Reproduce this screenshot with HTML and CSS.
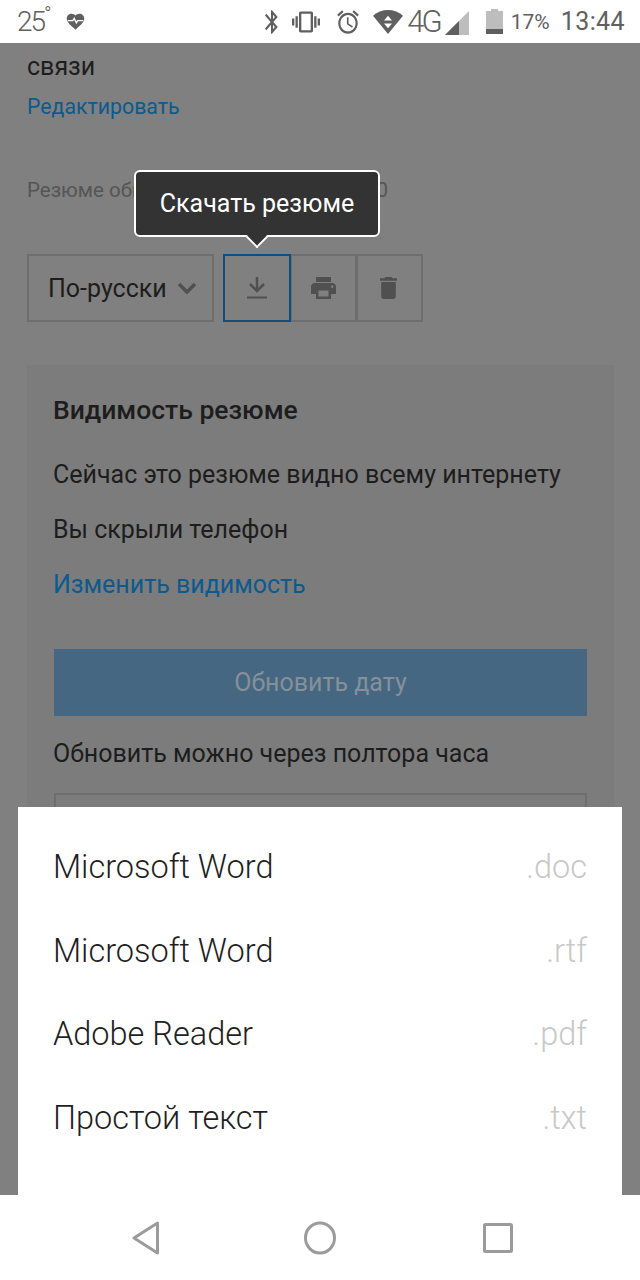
FILE: index.html
```html
<!DOCTYPE html>
<html lang="ru">
<head>
    <meta charset="UTF-8">
    <title>Резюме</title>
    <link rel="stylesheet" href="styles.css">
</head>
<body>
    <div class="statusbar">
        <div class="status-left">
            <span class="temp">25</span><span class="deg">°</span>
            <svg class="ic-heart" viewBox="0 0 24 24" preserveAspectRatio="none"><path d="M12 21.35l-1.45-1.32C5.4 15.36 2 12.28 2 8.5 2 5.42 4.42 3 7.5 3c1.74 0 3.41.81 4.5 2.09C13.09 3.81 14.76 3 16.5 3 19.58 3 22 5.42 22 8.5c0 3.78-3.4 6.86-8.55 11.54L12 21.35z"/><path class="pulse" d="M3 11h6l1.5-2.5 2.5 5 1.5-2.5h6.5"/></svg>
        </div>
        <div class="status-right">
            <svg class="ic-bt" viewBox="0 0 24 24" preserveAspectRatio="none"><path d="M17.71 7.71L12 2h-1v7.59L6.41 5 5 6.41 10.59 12 5 17.59 6.41 19 11 14.41V22h1l5.71-5.71-4.3-4.29 4.3-4.29zM13 5.83l1.88 1.88L13 9.59V5.83zm1.88 10.46L13 18.17v-3.76l1.88 1.88z"/></svg>
            <svg class="ic-vibrate" viewBox="0 0 24 24" preserveAspectRatio="none"><path d="M0 15h2V9H0v6zm3 2h2V7H3v10zm19-8v6h2V9h-2zm-3 8h2V7h-2v10zM16.5 3h-9C6.67 3 6 3.67 6 4.5v15c0 .83.67 1.5 1.5 1.5h9c.83 0 1.5-.67 1.5-1.5v-15c0-.83-.67-1.5-1.5-1.5zM16 19H8V5h8v14z"/></svg>
            <svg class="ic-alarm" viewBox="0 0 24 24" preserveAspectRatio="none"><path d="M22 5.72l-4.6-3.86-1.29 1.53 4.6 3.86L22 5.72zM7.88 3.39L6.6 1.86 2 5.71l1.29 1.53 4.59-3.85zM12.5 8H11v6l4.75 2.85.75-1.23-4-2.37V8zM12 4c-4.97 0-9 4.03-9 9s4.02 9 9 9c4.97 0 9-4.03 9-9s-4.03-9-9-9zm0 16c-3.87 0-7-3.13-7-7s3.13-7 7-7 7 3.13 7 7-3.13 7-7 7z"/></svg>
            <svg class="ic-wifi" viewBox="0 0 30 26" preserveAspectRatio="none"><path d="M0 7C8-1 22-1 30 7L15 26z"/><path class="arrows" d="M15 7l4 5h-8zM15 20l4-5h-8z"/></svg>
            <span class="net">4G</span>
            <svg class="ic-signal" viewBox="0 0 24 24" preserveAspectRatio="none"><path class="signal-off" d="M24 0v24H0z"/><path d="M14 10v14H0z"/></svg>
            <svg class="ic-battery" viewBox="0 0 17 25" preserveAspectRatio="none"><path class="battery-off" d="M5 0h7v2h5v23H0V2h5z"/><path d="M0 20h17v5H0z"/></svg>
            <span class="percent">17%</span>
            <span class="clock">13:44</span>
        </div>
    </div>

    <div class="screen">
        <div class="page">
            <p class="top-line">связи</p>
            <a class="edit-link">Редактировать</a>
            <p class="updated">Резюме обновлено 14 апреля в 12:50</p>

            <div class="actions">
                <div class="lang">По-русски
                    <svg class="chevron" viewBox="0 0 20 12"><path d="M2 2l8 8 8-8"/></svg>
                </div>
                <div class="tools">
                    <div class="tool tool-active">
                        <svg class="ic-download" viewBox="0 0 20 22" preserveAspectRatio="none"><path class="arrow" d="M10 0v13M3 7l7 7 7-7"/><path class="line" d="M0 20.5h20"/></svg>
                    </div>
                    <div class="tool">
                        <svg class="ic-print" viewBox="2 3 20 18" preserveAspectRatio="none"><path d="M19 8H5c-1.66 0-3 1.34-3 3v6h4v4h12v-4h4v-6c0-1.66-1.34-3-3-3zm-3 11H8v-5h8v5zm3-7c-.55 0-1-.45-1-1s.45-1 1-1 1 .45 1 1-.45 1-1 1zm-1-9H6v4h12V3z"/></svg>
                    </div>
                    <div class="tool">
                        <svg class="ic-trash" viewBox="5 3 14 18" preserveAspectRatio="none"><path d="M6 19c0 1.1.9 2 2 2h8c1.1 0 2-.9 2-2V7H6v12zM19 4h-3.5l-1-1h-5l-1 1H5v2h14V4z"/></svg>
                    </div>
                </div>
            </div>

            <div class="panel">
                <h3>Видимость резюме</h3>
                <p>Сейчас это резюме видно всему интернету</p>
                <p>Вы скрыли телефон</p>
                <a class="panel-link">Изменить видимость</a>
                <div class="update-btn">Обновить дату</div>
                <p class="update-note">Обновить можно через полтора часа</p>
                <div class="outline-box"></div>
            </div>
        </div>

        <div class="tooltip">Скачать резюме</div>

        <div class="sheet">
            <div class="sheet-row"><span>Microsoft Word</span><span class="ext">.doc</span></div>
            <div class="sheet-row"><span>Microsoft Word</span><span class="ext">.rtf</span></div>
            <div class="sheet-row"><span>Adobe Reader</span><span class="ext">.pdf</span></div>
            <div class="sheet-row"><span>Простой текст</span><span class="ext">.txt</span></div>
        </div>
    </div>

    <div class="navbar">
        <svg class="nav-back" viewBox="0 0 28 34" preserveAspectRatio="none"><path d="M25.5 2L2 17l23.5 15z"/></svg>
        <svg class="nav-home" viewBox="0 0 32 34" preserveAspectRatio="none"><ellipse cx="16" cy="17" rx="14.5" ry="15"/></svg>
        <svg class="nav-recent" viewBox="0 0 30 30" preserveAspectRatio="none"><rect x="1.5" y="1.5" width="27" height="27" rx="1"/></svg>
    </div>
</body>
</html>
```

FILE: styles.css
```css
* {
    box-sizing: border-box;
}

body {
    margin: 0;
    width: 640px;
    height: 1280px;
    display: flex;
    flex-direction: column;
    overflow: hidden;
    font-family: Roboto, "Noto Sans", sans-serif;
    background: #fff;
    color: #1d1d1d;
}

p {
    margin: 0;
}

/* Status bar */
.statusbar {
    height: 43px;
    flex: none;
    background: #fff;
    display: flex;
    justify-content: space-between;
    align-items: center;
    padding: 0 15px 0 17px;
    color: #606060;
}
.statusbar svg {
    fill: #5f5f5f;
    display: block;
}
.status-left,
.status-right {
    display: flex;
    align-items: center;
}
.temp {
    font-size: 28px;
    letter-spacing: -2px;
    font-weight: 300;
}
.deg {
    font-size: 20px;
    align-self: flex-start;
    margin-top: -3px;
    font-weight: 300;
}
.ic-heart {
    width: 21px;
    height: 21px;
    margin-left: 13px;
}
.statusbar .pulse {
    fill: none;
    stroke: #fff;
    stroke-width: 1.5;
}
.ic-bt {
    width: 24px;
    height: 28px;
}
.ic-vibrate {
    width: 28px;
    height: 28px;
    margin-left: 8px;
}
.ic-alarm {
    width: 26px;
    height: 28px;
    margin-left: 15px;
}
.ic-wifi {
    width: 30px;
    height: 25px;
    margin-left: 12px;
}
.statusbar .arrows {
    fill: #fff;
}
.net {
    font-size: 31px;
    font-weight: 300;
    letter-spacing: -3px;
    margin-left: 4px;
}
.ic-signal {
    width: 24px;
    height: 24px;
    margin-left: 5px;
    margin-top: 2px;
}
.statusbar .signal-off,
.statusbar .battery-off {
    fill: #bdbdbd;
}
.ic-battery {
    width: 17px;
    height: 25px;
    margin-left: 17px;
}
.percent {
    font-size: 21px;
    margin-left: 8px;
}
.clock {
    font-size: 25px;
    margin-left: 11px;
    letter-spacing: .4px;
}

/* Dimmed page under the sheet */
.screen {
    position: relative;
    flex: 1;
    overflow: hidden;
    background: #808080;
}
.page {
    padding: 8px 26px 0 27px;
    font-size: 25px;
}
.top-line {
    line-height: 32px;
}
.edit-link {
    display: block;
    color: #0d5a8f;
    font-size: 21.3px;
    line-height: 30px;
    margin-top: 9px;
}
.updated {
    margin-top: 55px;
    font-size: 20.5px;
    line-height: 26px;
    color: #555;
    white-space: nowrap;
}

.actions {
    display: flex;
    margin-top: 51px;
    height: 68px;
}
.lang {
    width: 187px;
    border: 2px solid #6e6e6e;
    display: flex;
    align-items: center;
    padding-left: 19px;
    gap: 10px;
}
.chevron {
    width: 20px;
    height: 12px;
    fill: none;
    stroke: #505050;
    stroke-width: 3.5;
}
.tools {
    display: flex;
    margin-left: 9px;
}
.tool {
    width: 67px;
    margin-left: -1px;
    border: 2px solid #6e6e6e;
    display: flex;
    align-items: center;
    justify-content: center;
}
.tool svg {
    fill: #505050;
}
.tool-active {
    width: 68px;
    margin-left: 0;
    border-color: #0f4f80;
    position: relative;
}
.ic-download {
    width: 20px;
    height: 22px;
}
.ic-download path {
    fill: none;
    stroke: #505050;
}
.ic-download .arrow {
    stroke-width: 2.5;
}
.ic-download .line {
    stroke-width: 2;
}
.ic-print {
    width: 25px;
    height: 22px;
}
.ic-trash {
    width: 17px;
    height: 22px;
    margin-right: 3px;
}

.panel {
    margin-top: 43px;
    background: #7c7c7c;
    padding: 27px 27px 0;
    height: 520px;
}
.panel h3 {
    margin: 0 0 0 -1px;
    font-size: 26.5px;
    font-weight: 500;
    line-height: 36px;
}
.panel p {
    line-height: 30px;
    margin: 25px 0 0 -1px;
}
.panel h3 + p {
    margin-top: 32px;
}
.panel-link {
    display: block;
    color: #0d5a8f;
    line-height: 30px;
    margin: 25px 0 0 -1px;
}
.update-btn {
    height: 67px;
    margin-top: 49px;
    background: #466781;
    color: #85909a;
    display: flex;
    align-items: center;
    justify-content: center;
}
.panel .update-note {
    margin-top: 23px;
}
.outline-box {
    height: 90px;
    margin-top: 24px;
    border: 2px solid #6e6e6e;
}

/* Tooltip */
.tooltip {
    position: absolute;
    top: 127px;
    left: 134px;
    width: 246px;
    height: 67px;
    background: #333;
    border: 2px solid #fff;
    border-radius: 6px;
    color: #fff;
    font-size: 25px;
    display: flex;
    align-items: center;
    justify-content: center;
}
.tooltip::after {
    content: "";
    position: absolute;
    left: 113px;
    bottom: -10px;
    width: 14px;
    height: 14px;
    background: #333;
    border-right: 2px solid #fff;
    border-bottom: 2px solid #fff;
    transform: rotate(45deg);
}

/* Format sheet */
.sheet {
    position: absolute;
    top: 764px;
    left: 18px;
    right: 18px;
    bottom: 0;
    background: #fff;
    padding: 18px 35px 0 35px;
}
.sheet-row {
    height: 83.7px;
    display: flex;
    align-items: center;
    justify-content: space-between;
    font-size: 32.5px;
    font-weight: 300;
    color: #1f1f1f;
}
.ext {
    color: #c8c8c8;
}

/* Nav bar */
.navbar {
    height: 85px;
    flex: none;
    background: #fff;
    display: flex;
    align-items: center;
    justify-content: center;
    padding-left: 4px;
}
.navbar svg {
    fill: none;
    stroke: #9b9b9b;
    stroke-width: 3;
    stroke-linejoin: round;
    display: block;
}
.nav-back {
    width: 28px;
    height: 34px;
}
.nav-home {
    width: 32px;
    height: 34px;
    margin-left: 144px;
}
.nav-recent {
    width: 30px;
    height: 30px;
    margin-left: 147px;
}
```
